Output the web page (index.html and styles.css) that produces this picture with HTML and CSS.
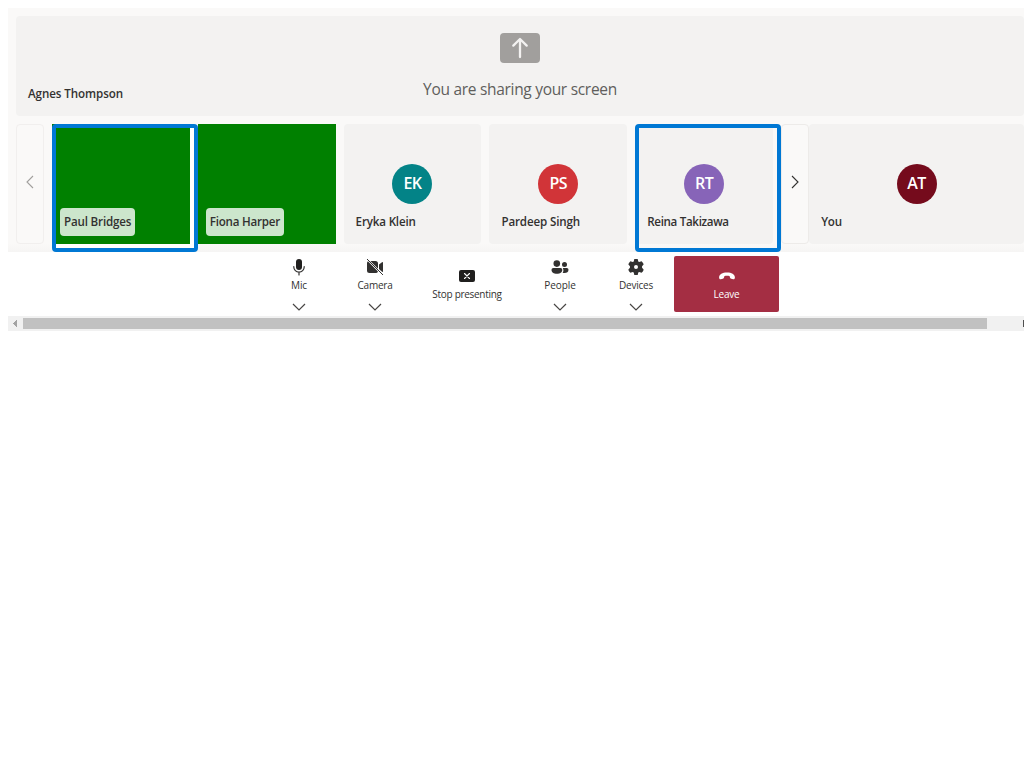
FILE: index.html
```html
<!DOCTYPE html>
<html lang="en">
<head>
<meta charset="utf-8">
<title>Call</title>
<link rel="stylesheet" href="styles.css">
</head>
<body>
<main class="call">
  <div class="stage">
    <section class="share">
      <svg class="share-icon" width="40" height="30" viewBox="0 0 40 30"><rect width="40" height="30" rx="4" fill="#a19f9d"/><path d="M20 24V6.2M13.3 12.6L20 6l6.7 6.6" fill="none" stroke="#f3f2f1" stroke-width="2.3" stroke-linecap="round" stroke-linejoin="round"/></svg>
      <p class="share-text">You are sharing your screen</p>
      <span class="name share-name">Agnes Thompson</span>
    </section>
    <section class="gallery">
      <button class="pager pager-off"><svg width="8" height="14" viewBox="0 0 8 14"><path d="M7 1L1 7l6 6"/></svg></button>
      <div class="tiles">
        <div class="tile video speaking"><span class="name label n-paul">Paul Bridges</span></div>
        <div class="tile video"><span class="name label n-fiona">Fiona Harper</span></div>
        <div class="tile"><span class="avatar teal">EK</span><span class="name n-eryka">Eryka Klein</span></div>
        <div class="tile"><span class="avatar red">PS</span><span class="name n-pardeep">Pardeep Singh</span></div>
        <div class="tile speaking"><span class="avatar purple">RT</span><span class="name n-reina">Reina Takizawa</span></div>
      </div>
      <button class="pager pager-next"><svg width="8" height="14" viewBox="0 0 8 14"><path d="M1 1l6 6-6 6"/></svg></button>
      <div class="tile self"><span class="avatar maroon">AT</span><span class="name n-you">You</span></div>
    </section>
  </div>
  <nav class="controls">
    <button class="control">
      <svg width="20" height="20" viewBox="0 0 20 20"><rect x="7" y="2" width="6" height="11" rx="3" fill="#201f1e"/><path d="M4.8 9.5V10a5.2 5.2 0 0 0 10.4 0v-.5M10 15.2V18" fill="none" stroke="#323130" stroke-width="1.2" stroke-linecap="round"/></svg>
      <span class="caption">Mic</span>
      <svg class="chevron" width="14" height="8" viewBox="0 0 14 8"><path d="M1 1l6 6 6-6"/></svg>
    </button>
    <button class="control">
      <svg width="20" height="20" viewBox="0 0 20 20"><path d="M5.3 4H10.500a2.500 2.500 0 0 1 2.500 2.500v5.200zM2.900 4.300L13 14.400A2.500 2.500 0 0 1 10.800 16H4.500A2.500 2.500 0 0 1 2 13.500v-7A2.500 2.500 0 0 1 2.900 4.300zM14 7.600l3-2.300q1-.6 1 .5v8.400q0 .9-.7.700L14 12z"/><path d="M2.300 2.300l15.400 15.400" fill="none" stroke="#323130" stroke-linecap="round"/></svg>
      <span class="caption c-camera">Camera</span>
      <svg class="chevron" width="14" height="8" viewBox="0 0 14 8"><path d="M1 1l6 6 6-6"/></svg>
    </button>
    <button class="control plain wide">
      <svg width="20" height="20" viewBox="0 0 20 20"><rect x="2" y="4" width="16" height="12" rx="2" fill="#201f1e"/><path d="M7.500 7.500l5 5m0-5l-5 5" fill="none" stroke="#fff" stroke-width="1.100" stroke-linecap="round"/></svg>
      <span class="caption c-stop">Stop presenting</span>
    </button>
    <button class="control">
      <svg width="20" height="20" viewBox="0 0 20 20"><circle cx="6.800" cy="6.600" r="3.300"/><circle cx="14.500" cy="7.400" r="2.500"/><path d="M3.300 11h7.200a1.800 1.800 0 0 1 1.800 1.800c0 2.800-2.200 4-5.400 4s-5.400-1.200-5.400-4A1.800 1.800 0 0 1 3.300 11zM12.800 11h4a1.700 1.700 0 0 1 1.700 1.700c0 2.100-1.600 3.300-4 3.300-.7 0-1.300-.1-1.900-.3.900-1.100 1.200-2.700.2-4.700z"/></svg>
      <span class="caption c-people">People</span>
      <svg class="chevron" width="14" height="8" viewBox="0 0 14 8"><path d="M1 1l6 6 6-6"/></svg>
    </button>
    <button class="control">
      <svg width="20" height="20" viewBox="0 0 20 20"><path fill-rule="evenodd" d="M8.300 2.100Q10 1.700 11.700 2.100L12.200 4.300Q12.500 4.800 13.200 4.900L15.600 4.200Q17 5.500 17.700 7.300L16.100 9.200Q15.800 10 16.100 10.800L17.700 12.700Q17 14.500 15.600 15.800L13.200 15.100Q12.500 15.200 12.200 15.700L11.700 17.900Q10 18.300 8.300 17.900L7.800 15.700Q7.500 15.200 6.800 15.100L4.400 15.800Q3 14.500 2.300 12.700L3.900 10.800Q4.200 10 3.900 9.200L2.300 7.300Q3 5.500 4.400 4.200L6.800 4.900Q7.500 4.800 7.800 4.300ZM10 8a2 2 0 1 0 0 4 2 2 0 0 0 0-4z"/></svg>
      <span class="caption c-devices">Devices</span>
      <svg class="chevron" width="14" height="8" viewBox="0 0 14 8"><path d="M1 1l6 6 6-6"/></svg>
    </button>
    <button class="control plain leave">
      <svg width="20" height="20" viewBox="0 0 20 20"><path fill="#fff" d="M10 6.400c4.700 0 7.700 1.800 7.900 4.800.1 1.300-.6 2.200-1.700 2l-2-.4c-.8-.2-1.200-.7-1.300-1.500l-.2-1c-1.700-.6-3.700-.6-5.400 0l-.2 1c-.1.800-.5 1.300-1.300 1.500l-2 .4c-1.100.2-1.800-.7-1.700-2 .2-3 3.200-4.800 7.900-4.800z"/></svg>
      <span class="caption c-leave">Leave</span>
    </button>
  </nav>
  <div class="scrollbar">
    <svg width="15" height="15" viewBox="0 0 15 15" shape-rendering="crispEdges"><path fill="#a3a3a3" d="M9 4v7L5 7.500z"/></svg>
    <div class="thumb"></div>
    <div class="scroll-end"></div>
  </div>
</main>
</body>
</html>
```

FILE: styles.css
```css
*, *::after { box-sizing: border-box; }
body { margin: 0; background: #fff; font-family: "Open Sans", "Noto Sans", sans-serif; color: #323130; overflow: hidden; }
button { font: inherit; color: inherit; border: 0; padding: 0; background: none; }
.call { margin: 8px 0 0 8px; overflow: hidden; }
.stage { height: 244px; padding: 8px 0 8px 8px; background: linear-gradient(#faf9f8 0, #faf9f8 236px, #f6f5f4 244px); display: flex; flex-direction: column; gap: 8px; }
.share { position: relative; height: 100px; padding-top: 17px; background: #f3f2f1; border-radius: 4px; display: flex; flex-direction: column; align-items: center; }
.share-icon { display: block; }
.share-text { margin: 16px 0 0; font-size: 15.5px; line-height: 21px; letter-spacing: -.3px; color: #605e5c; white-space: nowrap; }
.share-name { position: absolute; left: 12px; bottom: 14px; letter-spacing: -.08px; }
.name { font-size: 11.6px; line-height: 16px; font-weight: 600; white-space: nowrap; }
.gallery { height: 120px; display: flex; }
.pager { width: 28px; flex: none; display: flex; align-items: center; justify-content: center; border: 1px solid #f1efee; border-radius: 4px; padding: 0 2px 4px 0; }
.pager path { fill: none; stroke: #323130; stroke-width: 1.1; }
.pager-off { padding-right: 1px; }
.pager-off path { stroke: #a19f9d; }
.pager-next { padding-right: 0; border-color: #edebe9; }
.tiles { width: 736.7px; flex: none; padding-left: 8px; display: grid; grid-template-columns: repeat(5, 137.8px); column-gap: 8px; }
.tile { position: relative; background: #f3f2f1; border-radius: 4px; display: flex; flex-direction: column; align-items: flex-start; padding: 40px 12px 0; }
.video { background: green; border-radius: 0; padding: 84px 8px 0; }
.speaking::after { content: ""; position: absolute; left: 0; top: 0; width: 146px; height: 128px; border: 4px solid #0078d4; border-radius: 4px; }
.video.speaking { box-shadow: 4px 4px 0 #fff; }
.label { height: 28px; padding: 6px 4px; border-radius: 4px; background: rgba(255,255,255,.8); }
.n-paul { letter-spacing: -.17px; }
.n-fiona { letter-spacing: -.22px; }
.n-eryka { letter-spacing: -.17px; }
.n-pardeep { letter-spacing: -.14px; }
.n-reina { letter-spacing: -.32px; }
.n-you { letter-spacing: -.2px; }
.avatar { align-self: center; width: 40px; height: 40px; margin-bottom: 10px; border-radius: 50%; color: #fff; font-size: 16px; line-height: 39px; font-weight: 600; letter-spacing: -.5px; text-align: center; }
.teal { background: #038387; }
.red { background: #d13438; }
.purple { background: #8764b8; }
.maroon { background: #750b1c; }
.self { flex: 1; margin-left: .5px; }
.controls { height: 64px; padding: 4px 0 4px 253px; display: flex; background: #fff; }
.control { width: 76px; flex: none; display: flex; flex-direction: column; align-items: center; fill: #323130; padding-top: 1px; }
.caption { font-size: 10px; line-height: 14px; margin-top: 1px; letter-spacing: -.1px; white-space: nowrap; }
.c-camera, .c-devices { letter-spacing: -.25px; }
.c-stop { letter-spacing: -.3px; }
.c-leave { letter-spacing: -.2px; }
.chevron { margin-top: 11px; }
.chevron path { fill: none; stroke: #484644; stroke-width: 1.2; }
.plain { padding-top: 10px; }
.wide { width: 109px; padding-right: 1px; }
.leave { width: 105px; padding-right: 0; background: #a42e43; color: #fff; border-radius: 2px; }
.scrollbar { height: 15px; background: #f1f1f1; display: flex; align-items: center; }
.thumb { width: 964px; height: 11px; background: #c1c1c1; }
.scroll-end { width: 1px; height: 7px; margin-left: auto; background: #505050; }
```
